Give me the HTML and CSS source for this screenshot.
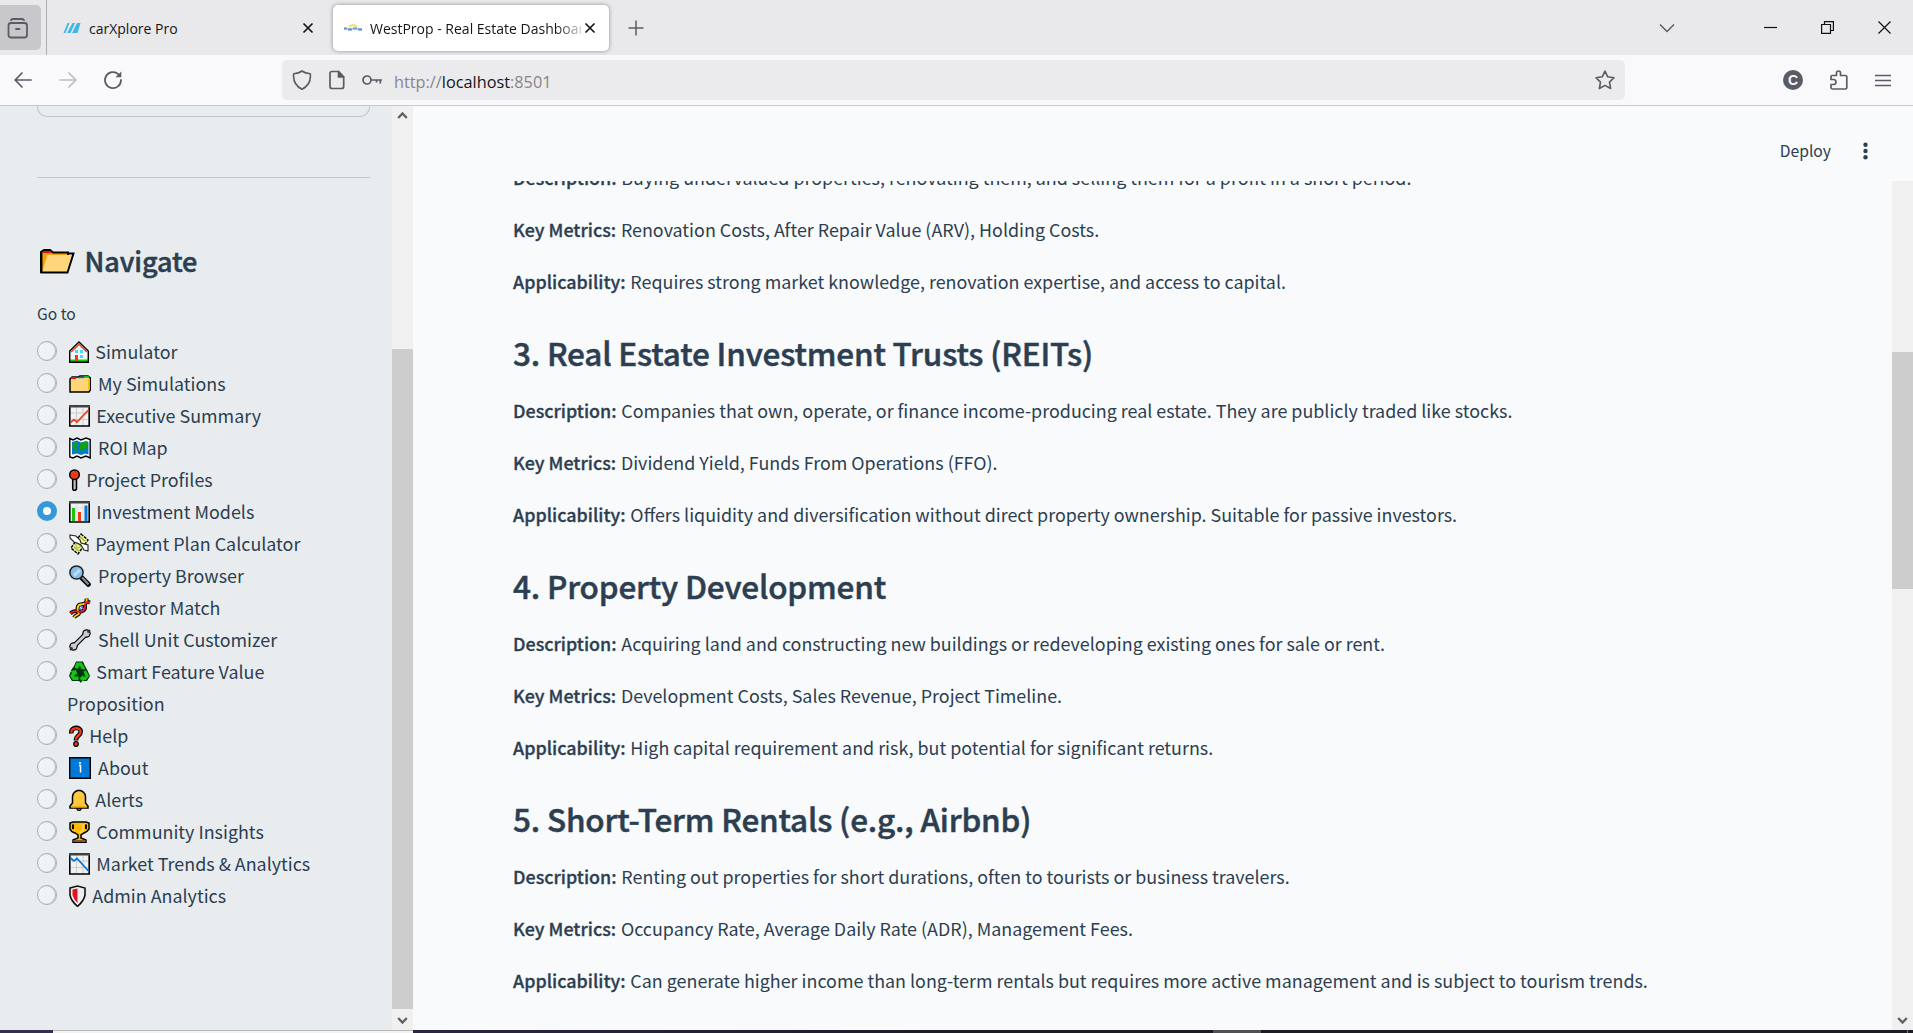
FILE: index.html
```html
<!DOCTYPE html>
<html lang="en">
<head>
<meta charset="utf-8">
<title>WestProp - Real Estate Dashboard</title>
<link rel="stylesheet" href="styles.css">
</head>
<body>
<div class="window">
  <header class="tabstrip">
    <div class="fxview"><svg width="22" height="22" viewBox="0 0 22 22" fill="none" stroke="#5b5b66" stroke-width="1.8" stroke-linecap="round"><path d="M4 2.2Q4.5 1 6 1H15Q16.600 1 17 2.200"/><rect x="1.500" y="5" width="18.500" height="14.500" rx="2.500"/><path d="M9 11H12.500"/></svg></div>
    <div class="tab-sep"></div>
    <div class="tab">
      <svg class="favicon" width="18" height="18" viewBox="0 0 18 18"><path d="M4.500 4H6.500L2.500 14H.500ZM9.500 4H12L7.500 14H4ZM14 4H17.500L14.500 14H9Z" fill="#41b6ec"/></svg>
      <span class="tab-title">carXplore Pro</span>
      <svg class="close" width="12" height="12" viewBox="0 0 12 12"><path d="M1.500 1.500L10.500 10.500M10.500 1.500L1.500 10.500" stroke="#15141a" stroke-width="1.700"/></svg>
    </div>
    <div class="tab active">
      <svg class="favicon" width="18" height="18" viewBox="0 0 18 18"><path d="M5 8Q9 4 13 8" fill="none" stroke="#f6dc7a" stroke-width="2"/><path d="M0 9.500H3M4 10.500H8M9 9.500H13M14 10.500H18" stroke="#4a7fc4" stroke-width="2.200"/><path d="M1 9.800H17.500" stroke="#86aede" stroke-width="1.200"/></svg>
      <span class="tab-title fade">WestProp - Real Estate Dashboard</span>
      <svg class="close" width="12" height="12" viewBox="0 0 12 12"><path d="M1.500 1.500L10.500 10.500M10.500 1.500L1.500 10.500" stroke="#15141a" stroke-width="1.700"/></svg>
    </div>
    <svg class="newtab" width="16" height="16" viewBox="0 0 16 16"><path d="M8 .500V15.500M.500 8H15.500" stroke="#5b5b66" stroke-width="1.500"/></svg>
    <div class="wincontrols">
      <svg width="16" height="10" viewBox="0 0 16 10"><path d="M1 1.500L8 8.500L15 1.500" fill="none" stroke="#5b5b66" stroke-width="1.500"/></svg>
      <svg width="13" height="13" viewBox="0 0 13 13"><path d="M0 6.500H13" stroke="#111" stroke-width="1.200"/></svg>
      <svg width="13" height="13" viewBox="0 0 13 13"><path d="M.600 3.500H9.500V12.400H.600ZM3.500 3.500V.600H12.400V9.500H9.500" fill="none" stroke="#111" stroke-width="1.200"/></svg>
      <svg width="13" height="13" viewBox="0 0 13 13"><path d="M.500 .500L12.500 12.500M12.500 .500L.500 12.500" stroke="#111" stroke-width="1.200"/></svg>
    </div>
  </header>

  <nav class="toolbar">
    <div class="navbtns">
      <svg width="18" height="18" viewBox="0 0 18 18" fill="none" stroke="#5b5b66" stroke-width="1.700" stroke-linecap="round"><path d="M17.200 9H1.200M8 2L1.200 9L8 16"/></svg>
      <svg width="18" height="18" viewBox="0 0 18 18" fill="none" stroke="#bdbdc2" stroke-width="1.700" stroke-linecap="round"><path d="M.800 9H16.800M10 2L16.800 9L10 16"/></svg>
      <svg width="20" height="20" viewBox="0 0 20 20" fill="none" stroke="#5b5b66" stroke-width="1.800" stroke-linecap="round"><path d="M15.500 4.300A8 8 0 1 0 18 10"/><path d="M18.300 1.500V7.200H12.500Z" fill="#5b5b66" stroke="none"/></svg>
    </div>
    <div class="urlbar">
      <svg width="20" height="20" viewBox="0 0 20 20" fill="none" stroke="#5b5b66" stroke-width="1.600" stroke-linejoin="round"><path d="M10 1Q13 3.300 18.300 3.800Q19.500 14.500 10 19.200Q.500 14.500 1.700 3.800Q7 3.300 10 1Z"/></svg>
      <svg width="16" height="20" viewBox="0 0 16 20" fill="none" stroke="#5b5b66" stroke-width="1.700" stroke-linejoin="round"><path d="M3 1.500H9.500L14.700 7V16.500Q14.700 18.500 12.700 18.500H3Q1 18.500 1 16.500V3.500Q1 1.500 3 1.500Z"/><path d="M9.500 1.500V7H14.700Z" fill="#5b5b66"/></svg>
      <svg width="21" height="12" viewBox="0 0 21 12" fill="none" stroke="#5b5b66" stroke-width="1.700"><circle cx="5" cy="6" r="4"/><path d="M9 6H20M18.300 6V9.500M14.500 6V8.500"/></svg>
      <span class="url">http://<b>localhost</b>:8501</span>
      <svg class="star" width="20" height="20" viewBox="0 0 20 20" fill="none" stroke="#5b5b66" stroke-width="1.600" stroke-linejoin="round"><path d="M10 1.200L12.700 6.800L19 7.700L14.500 12.100L15.600 18.500L10 15.400L4.400 18.500L5.500 12.100L1 7.700L7.300 6.800Z"/></svg>
    </div>
    <div class="tools">
      <span class="account">C</span>
      <svg width="18" height="20" viewBox="0 0 18 20" fill="none" stroke="#5b5b66" stroke-width="1.700" stroke-linejoin="round"><path d="M1 6.500Q1 5.500 2 5.500H6.500V3Q6.500 1 8.500 1T10.500 3V5.500H15.500Q16.800 5.500 16.800 6.800V17.500Q16.800 19 15.500 19H2.500Q1 19 1 17.500V14.500H3.500Q6 14.300 6 12T3.500 9.500H1Z"/></svg>
      <svg width="16" height="13" viewBox="0 0 16 13"><path d="M0 1.500H16M0 6.500H16M0 11.500H16" stroke="#5b5b66" stroke-width="1.500"/></svg>
    </div>
  </nav>

  <div class="page">
    <aside class="sidebar">
      <div class="side-content">
        <div class="side-box"></div>
        <hr class="divider">
        <h2 class="nav-title"><svg width="35" height="25" viewBox="0 0 35 25" stroke-linejoin="miter"><path d="M1 24V3L4 1H10L13 3.500H28V8" fill="#f0a30a" stroke="#000" stroke-width="2"/><path d="M3 2H11L12 4H3Z" fill="#e81123"/><path d="M7.500 6H33.500L28 23.500H2Z" fill="#ffd679"/><path d="M28 4.500H33.500L27.500 23.500H1.500V3" fill="none" stroke="#000" stroke-width="1.900"/></svg>Navigate</h2>
        <div class="goto">Go to</div>
        <ul class="radios">
          <li><i></i><span><svg width="20" height="22" viewBox="0 0 20 22"><path d="M2.500 10V20H17.500V10L10 3Z" fill="#f7f7f7"/><path d="M.500 18.500H19.500V21.300H.500Z" fill="#16c60c"/><path d="M2.200 11L10 3.300L17.800 11" fill="none" stroke="#f03a17" stroke-width="1.300"/><path d="M.700 21.300V10L10 1L19.300 10V21.300Z" fill="none" stroke="#000" stroke-width="1.400"/><path d="M6 9H9V12H6ZM11 9H14V12H11ZM11 14H14V17H11Z" fill="#3ddcff"/><path d="M6 14H9V20H6Z" fill="#f03a17"/></svg>Simulator</span></li>
          <li><i></i><span><svg width="22" height="22" viewBox="0 0 22 22"><path d="M1 6L3 4H9L11 3H19L21.300 5V17L20 19H1Z" fill="#ffd679" stroke="#000" stroke-width="1.500"/><path d="M2 5H7" stroke="#e81123" stroke-width="2"/><path d="M9 4.500H15" stroke="#0078d7" stroke-width="1.500"/><path d="M15 4H20" stroke="#16c60c" stroke-width="1.800"/><path d="M19 6H21V17H19Z" fill="#ffb900"/></svg>My Simulations</span></li>
          <li><i></i><span><svg width="21" height="22" viewBox="0 0 21 22"><path d="M.800 1H20.200V21H.800Z" fill="#f2f2f2" stroke="#000" stroke-width="1.600"/><path d="M7.500 2V20M14 2V20M2 8H19M2 14.500H19" stroke="#ccc"/><path d="M0 1.500H21" stroke="#444" stroke-width="2"/><path d="M1.500 17.500L5 14.500L8 17L19.500 5" fill="none" stroke="#f03a17" stroke-width="1.700"/></svg>Executive Summary</span></li>
          <li><i></i><span><svg width="22" height="22" viewBox="0 0 22 22"><path d="M.800 1.500L4 3L8 1L12 3L17 1L21.200 2.500V21L17 19L12 21L8 19L4 21L.800 20Z" fill="#fff" stroke="#000" stroke-width="1.400"/><path d="M3 5L8 3.500L12 5.500L17 4L19.500 5V17.500L16 16.500L12 18L8 16.500L3 17.500Z" fill="#0078d7"/><path d="M4 6L9 5L8 9L6 10L9 13L7 16L5 12L3 9ZM11 6L17 4.500L19 7L17 13L15 11L14 15L11 13Z" fill="#13a10e"/></svg>ROI Map</span></li>
          <li><i></i><span><svg width="11" height="22" viewBox="0 0 11 22"><path d="M3.700 9H7.500V20L6.500 21.300H4.500L3.700 20Z" fill="#bbb" stroke="#000" stroke-width="1.500"/><circle cx="5.500" cy="5.700" r="4.800" fill="#f03a17" stroke="#000" stroke-width="1.500"/></svg>Project Profiles</span></li>
          <li><i class="on"></i><span><svg width="21" height="22" viewBox="0 0 21 22"><path d="M.800 1H20.200V21H.800Z" fill="#f2f2f2" stroke="#000" stroke-width="1.600"/><path d="M8 2V20M14 2V20M2 7H19" stroke="#ddd"/><path d="M0 1.500H21" stroke="#444" stroke-width="2"/><path d="M3 7H6V20H3Z" fill="#16c60c"/><path d="M9 11H12V20H9Z" fill="#f03a17"/><path d="M15.500 4.500H18.500V20H15.500Z" fill="#0078d7"/></svg>Investment Models</span></li>
          <li><i></i><span><svg width="20" height="22" viewBox="0 0 20 22"><path d="M12 1L19 7L9 21L2 15Z" fill="#eff09a" stroke="#000" stroke-width="1.400" stroke-dasharray="3 1"/><path d="M11 4L16 8M5 14L10 18M8 10L12 13" stroke="#a3b43a" stroke-width="1.500"/><circle cx="9.500" cy="12" r="2.700" fill="none" stroke="#a3b43a"/><path d="M1 2L7 3L11 7L12 10L19 12V18L15 17L12 12L8 10L5 9L1 5Z" fill="#fff" stroke="#222" stroke-width="1.100"/></svg>Payment Plan Calculator</span></li>
          <li><i></i><span><svg width="22" height="22" viewBox="0 0 22 22"><path d="M12.500 12.500L19.300 19.300" stroke="#000" stroke-width="5" stroke-linecap="round"/><path d="M13 12.500L19.500 19.300" stroke="#888" stroke-width="2.400"/><circle cx="7.500" cy="7.500" r="6.600" fill="#83beec" stroke="#222" stroke-width="1.500"/><path d="M4 9L10 3.500L12 6L6 12Z" fill="#b9dcf7"/></svg>Property Browser</span></li>
          <li><i></i><span><svg width="22" height="22" viewBox="0 0 22 22" fill="none"><path d="M17.500 1.500C18.500 7 15 7 11.500 7.500S8 13 9.500 15.500S7 17.500 5 20.500" stroke="#000" stroke-width="4"/><path d="M21 5.500C17 4 15.500 6 16 9.500S13 15.500 8.500 14.500S4 14.500 1.500 16.500" stroke="#000" stroke-width="4"/><path d="M8.500 9.500L14 14.500M10.500 8L15.500 12.500" stroke="#3a6fd8" stroke-width="1.400"/><path d="M17.500 1.500C18.500 7 15 7 11.500 7.500S8 13 9.500 15.500S7 17.500 5 20.500" stroke="#ffd500" stroke-width="1.800"/><path d="M21 5.500C17 4 15.500 6 16 9.500S13 15.500 8.500 14.500S4 14.500 1.500 16.500" stroke="#f01830" stroke-width="1.900"/></svg>Investor Match</span></li>
          <li><i></i><span><svg width="22" height="22" viewBox="0 0 22 22" fill="none"><path d="M4.500 17.500L17.500 4.500" stroke="#000" stroke-width="5.200"/><circle cx="4.500" cy="17.500" r="4.200" fill="#000"/><circle cx="17.500" cy="4.500" r="4.200" fill="#000"/><path d="M4.500 17.500L17.500 4.500" stroke="#ccc" stroke-width="2.900"/><circle cx="4.500" cy="17.500" r="3" fill="#ccc"/><circle cx="17.500" cy="4.500" r="3" fill="#ccc"/><path d="M18.500 3.500L21 1M3.500 18.500L1 21" stroke="#333" stroke-width="1.800"/></svg>Shell Unit Customizer</span></li>
          <li><i></i><span><svg width="21" height="22" viewBox="0 0 21 22"><path d="M7 .500H14L16 5L18 8.500L21 15L18 20H13L12 22L10 20H3L0 15L2.500 8.500L5 5Z" fill="#031"/><path d="M7.500 1.500H12.500L15 5.500L16.500 8.500L11.500 8L12.500 7L10.500 4.500L8.500 8L5.500 6.500ZM1.500 10L7 9L8.500 14L6.500 13L5 15.500H9.500V19H4L1 15L3 12ZM14.500 10.500L17 9.500L20 15L17 19H14.500V21L10.500 17.500L14 14V15.500H16.500Z" fill="#16c60c"/></svg>Smart Feature Value Proposition</span></li>
          <li><i></i><span><svg width="14" height="22" viewBox="0 0 14 22" fill="none"><path d="M2.300 8.500C1.500 1.200 11.700 1.500 11.700 6.500C11.700 11 7 10 7 15.500" stroke="#000" stroke-width="4.600"/><circle cx="7" cy="19" r="2.900" fill="#000"/><path d="M2.300 7.700C1.800 1.900 11.700 2 11.700 6.500C11.700 11 7 10 7 14.700" stroke="#f03a17" stroke-width="2.400"/><circle cx="7" cy="19" r="1.700" fill="#f03a17"/></svg>Help</span></li>
          <li><i></i><span><svg width="22" height="22" viewBox="0 0 22 22"><path d="M.700 .700H21.300V21.300H.700Z" fill="#0078d7" stroke="#000" stroke-width="1.400"/><path d="M10 8.500H11.500V15.500" stroke="#fff" stroke-width="1.500" fill="none"/><circle cx="11" cy="6" r="1.100" fill="#fff"/></svg>About</span></li>
          <li><i></i><span><svg width="20" height="22" viewBox="0 0 20 22"><circle cx="10" cy="19.500" r="2.300" fill="#8e562e" stroke="#000"/><path d="M8.500 1.500H11.500Q16.500 3.500 16.500 8V14L19 17V19H1V17L3.500 14V8Q3.500 3.500 8.500 1.500Z" fill="#ffc83d" stroke="#000" stroke-width="1.500"/><path d="M2 18H18" stroke="#f0a30a" stroke-width="1.500"/></svg>Alerts</span></li>
          <li><i></i><span><svg width="21" height="22" viewBox="0 0 21 22"><path d="M1 2L4 1H17L20 2V8Q18 11 15 12L12 14V17L17 19V21.300H4V19L9 17V14L6 12Q2 11 1 8Z" fill="#ffb900" stroke="#000" stroke-width="1.500"/><path d="M4 3.500V8M17 3.500V8" stroke="#000" stroke-width="2"/><path d="M14 3V9L11 12" fill="none" stroke="#ffd679" stroke-width="1.500"/><path d="M4.500 20H16.500" stroke="#8e562e" stroke-width="2"/></svg>Community Insights</span></li>
          <li><i></i><span><svg width="21" height="22" viewBox="0 0 21 22"><path d="M.800 1H20.200V21H.800Z" fill="#f2f2f2" stroke="#000" stroke-width="1.600"/><path d="M7.500 2V20M14 2V20M2 8H19M2 14.500H19" stroke="#ccc"/><path d="M0 1.500H21" stroke="#444" stroke-width="2"/><path d="M1.500 5L5 8L8 5.500L19.500 18" fill="none" stroke="#0078d7" stroke-width="1.700"/></svg>Market Trends &amp; Analytics</span></li>
          <li><i></i><span><svg width="17" height="22" viewBox="0 0 17 22"><path d="M1 3L8.500 1L16 3V10Q15 16 8.500 21.300Q2 16 1 10Z" fill="#eee" stroke="#111" stroke-width="1.600"/><path d="M8.500 3.500L3.500 4.500V10Q4.500 14.500 8.500 18Z" fill="#e81123"/></svg>Admin Analytics</span></li>
        </ul>
      </div>
      <div class="scroll side-scroll">
        <svg width="11" height="9" viewBox="0 0 11 9"><path d="M1.200 7L5.500 2.500L9.800 7" fill="none" stroke="#606060" stroke-width="2.300"/></svg>
        <div class="thumb"></div>
        <svg width="11" height="9" viewBox="0 0 11 9"><path d="M1.200 2L5.500 6.500L9.800 2" fill="none" stroke="#606060" stroke-width="2.300"/></svg>
      </div>
    </aside>

    <main class="main">
      <div class="app-header"><span class="deploy">Deploy</span><svg width="5" height="18" viewBox="0 0 5 18" fill="#2c3e50"><circle cx="2.500" cy="2.700" r="2.200"/><circle cx="2.500" cy="9" r="2.200"/><circle cx="2.500" cy="15.300" r="2.200"/></svg></div>
      <div class="viewport">
        <article class="content">
          <p><strong>Description:</strong> Buying undervalued properties, renovating them, and selling them for a profit in a short period.</p>
          <p><strong>Key Metrics:</strong> Renovation Costs, After Repair Value (ARV), Holding Costs.</p>
          <p><strong>Applicability:</strong> Requires strong market knowledge, renovation expertise, and access to capital.</p>
          <h3>3. Real Estate Investment Trusts (REITs)</h3>
          <p><strong>Description:</strong> Companies that own, operate, or finance income-producing real estate. They are publicly traded like stocks.</p>
          <p><strong>Key Metrics:</strong> Dividend Yield, Funds From Operations (FFO).</p>
          <p><strong>Applicability:</strong> Offers liquidity and diversification without direct property ownership. Suitable for passive investors.</p>
          <h3>4. Property Development</h3>
          <p><strong>Description:</strong> Acquiring land and constructing new buildings or redeveloping existing ones for sale or rent.</p>
          <p><strong>Key Metrics:</strong> Development Costs, Sales Revenue, Project Timeline.</p>
          <p><strong>Applicability:</strong> High capital requirement and risk, but potential for significant returns.</p>
          <h3>5. Short-Term Rentals (e.g., Airbnb)</h3>
          <p><strong>Description:</strong> Renting out properties for short durations, often to tourists or business travelers.</p>
          <p><strong>Key Metrics:</strong> Occupancy Rate, Average Daily Rate (ADR), Management Fees.</p>
          <p><strong>Applicability:</strong> Can generate higher income than long-term rentals but requires more active management and is subject to tourism trends.</p>
        </article>
        <div class="scroll main-scroll">
          <div class="thumb"></div>
          <svg width="11" height="9" viewBox="0 0 11 9"><path d="M1.200 2L5.500 6.500L9.800 2" fill="none" stroke="#606060" stroke-width="2.300"/></svg>
        </div>
      </div>
    </main>
  </div>
  <footer class="taskbar"><div class="tb-start"></div><div class="tb-search"></div><div class="tb-apps"></div><div class="tb-active"></div><div class="tb-rest"></div><div class="tb-peek"></div></footer>
</div>
</body>
</html>
```
FILE: styles.css
```css
* { box-sizing: border-box; }
body { margin: 0; overflow: hidden; background: #f8fafc; color: #2c3e50; font-family: "Noto Sans CJK SC", sans-serif; font-size: 17.9px; }
svg { display: block; flex: none; }
.window { width: 1913px; height: 1033px; display: flex; flex-direction: column; }

/* browser chrome */
.tabstrip { height: 55px; flex: none; background: #e9e9eb; display: flex; align-items: center; font: 14px "Open Sans", sans-serif; color: #15141a; }
.fxview { width: 41px; height: 45px; background: #c8c8ca; border-radius: 0 5px 5px 0; padding: 13px 0 0 7px; }
.tab-sep { width: 1px; height: 55px; margin-left: 5px; background: #aeaeb2; }
.tab { width: 276px; height: 46px; margin-left: 5px; padding: 0 14px 0 11px; display: flex; align-items: center; border-radius: 5px; }
.tab.active { padding-right: 13px; background: #fff; box-shadow: 0 0 4px rgba(0, 0, 0, .4); }
.tab + .tab { margin-left: 5px; }
.favicon { margin-right: 8px; }
.tab-title { flex: 1; overflow: hidden; white-space: nowrap; padding-top: 2px; }
.tab-title.fade { -webkit-mask-image: linear-gradient(to right, #000 88%, transparent 103%); mask-image: linear-gradient(to right, #000 88%, transparent 103%); }
.close { margin-left: 3px; }
.newtab { margin-left: 19px; }
.wincontrols { margin-left: auto; display: flex; align-items: center; padding-right: 22px; gap: 44px; }
.wincontrols svg:first-child { margin-right: 45px; }
.toolbar { height: 51px; flex: none; background: #f9f9fb; border-bottom: 1px solid #c8c8cc; display: flex; align-items: center; }
.navbtns { width: 282px; padding-left: 14px; display: flex; align-items: center; gap: 26.5px; }
.urlbar { width: 1343px; height: 40px; border-radius: 5px; background: #ebebed; padding: 0 10px 0 10px; display: flex; align-items: center; }
.urlbar svg + svg { margin-left: 17px; }
.url { margin-left: 11px; font: 16.3px "Open Sans", sans-serif; color: #86868a; padding-top: 3px; }
.url b { font-weight: 400; color: #15141a; }
.urlbar .star { margin-left: auto; }
.tools { margin-left: auto; display: flex; align-items: center; padding-right: 22px; gap: 27px; }
.account { width: 20px; height: 20px; border-radius: 50%; background: #5b5b66; color: #f9f9fb; font: 700 14px/20px "Liberation Sans", sans-serif; text-align: center; }

/* page */
.page { flex: 1; min-height: 0; display: flex; }
.sidebar { width: 413px; background: #e8ecef; display: flex; overflow: hidden; }
.side-content { width: 392px; padding: 0 22px 0 37px; }
.side-box { height: 11px; border: 1px solid #bfc5d0; border-top: 0; border-radius: 0 0 10px 10px; }
.divider { border: 0; height: 1px; background: #c2c8d2; margin: 60px 0 0; }
.nav-title { display: flex; align-items: center; margin: 62px 0 0; height: 42px; padding-left: 3px; font-size: 27px; font-weight: 500; line-height: 42px; letter-spacing: -.1px; -webkit-text-stroke: .5px; }
.nav-title svg { margin-right: 9.500px; }
.goto { margin-top: 19px; font-size: 15.6px; line-height: 24px; }
.radios { list-style: none; margin: 10px 0 0; padding: 0; line-height: 32px; }
.radios li { display: flex; }
.radios span { max-width: 280px; }
.radios i { flex: none; width: 20px; height: 20px; margin: 6px 10px 0 0; border-radius: 50%; background: #f0f2f5; border: 1px solid #a5adb8; box-shadow: inset -1px 0 0 #b5bcc6; }
.radios i.on { background: #fff; border: 6.500px solid #3498db; box-shadow: none; }
.radios svg { display: inline-block; vertical-align: -4px; margin: -4px 6.700px 0 1.600px; }
.radios svg[width="22"] { margin-right: 7.500px; }
.scroll { width: 21px; background: #f0f0f0; display: flex; flex-direction: column; align-items: center; }
.thumb { width: 21px; background: #cdcdcd; }
.side-scroll { padding: 5px 0 5px; }
.side-scroll .thumb { height: 660px; margin: 229px 0 7px; }

.main { flex: 1; display: flex; flex-direction: column; min-width: 0; }
.app-header { height: 75px; flex: none; display: flex; align-items: center; justify-content: flex-end; padding: 15px 45px 0 0; font-size: 15.700px; }
.deploy { margin-top: -2px; }
.app-header svg { margin: -1px 0 0 32px; }
.viewport { flex: 1; min-height: 0; display: flex; overflow: hidden; }
.content { flex: 1; padding-left: 100px; margin-top: -20px; }
.content p { margin: 0 0 20px; line-height: 32px; white-space: nowrap; }
.content strong { font-weight: 500; margin-right: .800px; -webkit-text-stroke: .3px; }
.content h3 { margin: 0; padding: 14px 0 21px; font-size: 31.500px; font-weight: 500; line-height: 42px; letter-spacing: -.17px; -webkit-text-stroke: .5px; }
.main-scroll .thumb { height: 237px; margin-top: 171px; }
.main-scroll svg { margin-top: auto; margin-bottom: 5px; }

.taskbar { height: 3px; flex: none; display: flex; background: #1c1c22; }
.tb-start { width: 53px; background: #352f4d; }
.tb-search { width: 360px; background: #f2f2f2; border-top: 1px solid #b8b8b8; }
.tb-apps { width: 800px; background: linear-gradient(to right, #2b2542, #1c1b24 70%); }
.tb-active { width: 48px; background: #505052; }
.tb-rest { width: 646px; }
.tb-peek { width: 1px; background: #77777a; }
```
